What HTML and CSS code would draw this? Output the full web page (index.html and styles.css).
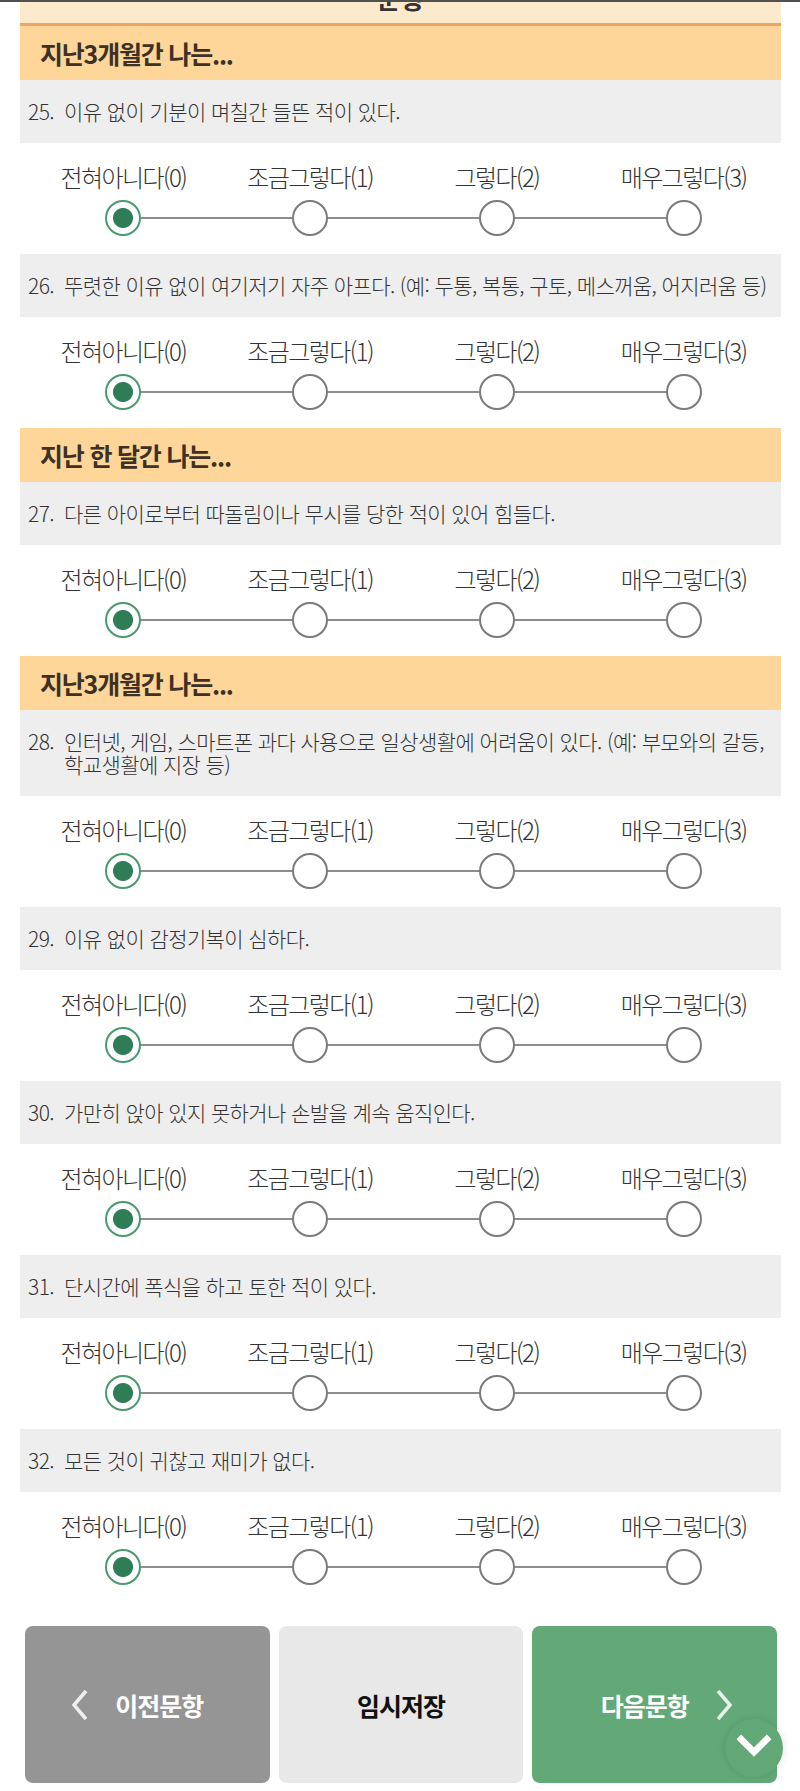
FILE: index.html
```html
<!DOCTYPE html>
<html lang="ko">

<head>
  <meta charset="UTF-8">
  <meta name="viewport" content="width=device-width, initial-scale=1.0">
  <title>마음건강 자가검사</title>

  <link rel="stylesheet" href="styles.css">

</head>

<body>

  <div class="page">
    <div class="title">
      <h1>문항</h1>
    </div>

    <!-- 지난 3개월 -->
    <div class="group">지난3개월간 나는...</div>

    <div class="q"><span class="no">25.</span><span>이유 없이 기분이 며칠간 들뜬 적이 있다.</span></div>
    <div class="opts">
      <label class="opt"><span>전혀아니다(0)</span><input type="radio" name="q25" checked></label>
      <label class="opt"><span>조금그렇다(1)</span><input type="radio" name="q25"></label>
      <label class="opt"><span>그렇다(2)</span><input type="radio" name="q25"></label>
      <label class="opt"><span>매우그렇다(3)</span><input type="radio" name="q25"></label>
    </div>

    <div class="q"><span class="no">26.</span><span>뚜렷한 이유 없이 여기저기 자주 아프다. (예: 두통, 복통, 구토, 메스꺼움, 어지러움 등)</span></div>
    <div class="opts">
      <label class="opt"><span>전혀아니다(0)</span><input type="radio" name="q26" checked></label>
      <label class="opt"><span>조금그렇다(1)</span><input type="radio" name="q26"></label>
      <label class="opt"><span>그렇다(2)</span><input type="radio" name="q26"></label>
      <label class="opt"><span>매우그렇다(3)</span><input type="radio" name="q26"></label>
    </div>

    <!-- 지난 한 달 -->
    <div class="group">지난 한 달간 나는...</div>

    <div class="q"><span class="no">27.</span><span>다른 아이로부터 따돌림이나 무시를 당한 적이 있어 힘들다.</span></div>
    <div class="opts">
      <label class="opt"><span>전혀아니다(0)</span><input type="radio" name="q27" checked></label>
      <label class="opt"><span>조금그렇다(1)</span><input type="radio" name="q27"></label>
      <label class="opt"><span>그렇다(2)</span><input type="radio" name="q27"></label>
      <label class="opt"><span>매우그렇다(3)</span><input type="radio" name="q27"></label>
    </div>

    <!-- 지난 3개월 -->
    <div class="group">지난3개월간 나는...</div>

    <div class="q"><span class="no">28.</span><span>인터넷, 게임, 스마트폰 과다 사용으로 일상생활에 어려움이 있다. (예: 부모와의 갈등, 학교생활에 지장 등)</span></div>
    <div class="opts">
      <label class="opt"><span>전혀아니다(0)</span><input type="radio" name="q28" checked></label>
      <label class="opt"><span>조금그렇다(1)</span><input type="radio" name="q28"></label>
      <label class="opt"><span>그렇다(2)</span><input type="radio" name="q28"></label>
      <label class="opt"><span>매우그렇다(3)</span><input type="radio" name="q28"></label>
    </div>

    <div class="q"><span class="no">29.</span><span>이유 없이 감정기복이 심하다.</span></div>
    <div class="opts">
      <label class="opt"><span>전혀아니다(0)</span><input type="radio" name="q29" checked></label>
      <label class="opt"><span>조금그렇다(1)</span><input type="radio" name="q29"></label>
      <label class="opt"><span>그렇다(2)</span><input type="radio" name="q29"></label>
      <label class="opt"><span>매우그렇다(3)</span><input type="radio" name="q29"></label>
    </div>

    <div class="q"><span class="no">30.</span><span>가만히 앉아 있지 못하거나 손발을 계속 움직인다.</span></div>
    <div class="opts">
      <label class="opt"><span>전혀아니다(0)</span><input type="radio" name="q30" checked></label>
      <label class="opt"><span>조금그렇다(1)</span><input type="radio" name="q30"></label>
      <label class="opt"><span>그렇다(2)</span><input type="radio" name="q30"></label>
      <label class="opt"><span>매우그렇다(3)</span><input type="radio" name="q30"></label>
    </div>

    <div class="q"><span class="no">31.</span><span>단시간에 폭식을 하고 토한 적이 있다.</span></div>
    <div class="opts">
      <label class="opt"><span>전혀아니다(0)</span><input type="radio" name="q31" checked></label>
      <label class="opt"><span>조금그렇다(1)</span><input type="radio" name="q31"></label>
      <label class="opt"><span>그렇다(2)</span><input type="radio" name="q31"></label>
      <label class="opt"><span>매우그렇다(3)</span><input type="radio" name="q31"></label>
    </div>

    <div class="q"><span class="no">32.</span><span>모든 것이 귀찮고 재미가 없다.</span></div>
    <div class="opts">
      <label class="opt"><span>전혀아니다(0)</span><input type="radio" name="q32" checked></label>
      <label class="opt"><span>조금그렇다(1)</span><input type="radio" name="q32"></label>
      <label class="opt"><span>그렇다(2)</span><input type="radio" name="q32"></label>
      <label class="opt"><span>매우그렇다(3)</span><input type="radio" name="q32"></label>
    </div>

    <!-- 하단 버튼 -->
    <div class="nav">
      <button class="btn prev">
        <svg viewBox="0 0 18 32"><polyline points="15,2 3,16 15,30" /></svg>
        이전문항
      </button>
      <button class="btn save">임시저장</button>
      <button class="btn next">
        다음문항
        <svg viewBox="0 0 18 32"><polyline points="3,2 15,16 3,30" /></svg>
      </button>
    </div>
  </div>

  <a class="to-bottom" href="#">
    <svg viewBox="0 0 40 26"><polyline points="4,4 20,20 36,4" /></svg>
  </a>

</body>

</html>
```

FILE: styles.css
```css
* {
  margin: 0;
  padding: 0;
  box-sizing: border-box;
}

body {
  font-family: "Noto Sans CJK KR", "Noto Sans", sans-serif;
  color: #333;
  background: #fff;
  border-top: 2px solid #505050;
}

.page {
  padding: 0 19px 8px 20px;
}

/* 상단 타이틀 (스크롤로 잘려 있음) */
.title {
  height: 24px;
  background: #fdeacd;
  border-bottom: 3px solid #eaa662;
  text-align: center;
  overflow: hidden;
}

.title h1 {
  font-size: 26px;
  line-height: 26px;
  font-weight: 700;
  color: #333;
  margin-top: -17px;
}

.group {
  height: 54px;
  background: #fed699;
  padding-left: 20px;
  display: flex;
  align-items: center;
  font-size: 25px;
  font-weight: 700;
  letter-spacing: -1.2px;
  color: #3d3125;
}

.q {
  display: flex;
  background: #eeeeee;
  padding: 20px 10px 20px 8px;
  font-size: 21px;
  line-height: 23px;
  font-weight: 300;
  letter-spacing: -0.6px;
  color: #333;
  word-break: keep-all;
}

.q .no {
  flex: none;
  width: 36px;
}

/* 보기 + 라디오 */
.opts {
  position: relative;
  display: grid;
  grid-template-columns: repeat(4, 1fr);
  margin: 0 4px 0 10px;
  padding: 20px 0 18px;
}

.opts::before {
  content: '';
  position: absolute;
  left: 12.5%;
  right: 12.5%;
  top: 74px;
  height: 2px;
  background: #8d8d8d;
}

.opt {
  display: flex;
  flex-direction: column;
  align-items: center;
}

.opt span {
  font-size: 24px;
  line-height: 28px;
  font-weight: 300;
  letter-spacing: -1.6px;
  white-space: nowrap;
  margin-bottom: 9px;
}

.opt input {
  appearance: none;
  -webkit-appearance: none;
  position: relative;
  width: 36px;
  height: 36px;
  margin: 0;
  border-radius: 50%;
  border: 2px solid #7b7b7b;
  background: #fff;
}

.opt input:checked {
  border-color: #4a9a70;
  background: radial-gradient(circle, #2e7d57 9.5px, #fff 10.5px);
}

/* 이전 / 임시저장 / 다음 */
.nav {
  display: grid;
  grid-template-columns: repeat(3, 1fr);
  gap: 9px;
  margin: 23px 4px 0 5px;
}

.btn {
  height: 157px;
  border: none;
  border-radius: 8px;
  display: flex;
  align-items: center;
  justify-content: center;
  gap: 26px;
  font-family: inherit;
  font-size: 25px;
  font-weight: 700;
  letter-spacing: -1px;
}

.btn svg {
  width: 18px;
  height: 32px;
  fill: none;
  stroke: rgba(255, 255, 255, 0.85);
  stroke-width: 3.5;
}

.prev {
  background: #959595;
  color: #fff;
  padding-right: 20px;
}

.save {
  background: #e8e8e8;
  color: #111;
}

.next {
  background: #63a978;
  color: #fff;
  padding-left: 24px;
}

.to-bottom {
  position: fixed;
  right: 17px;
  bottom: 14px;
  width: 58px;
  height: 58px;
  border-radius: 50%;
  background: #62a877;
  box-shadow: 0 0 8px rgba(0, 0, 0, 0.12);
  display: flex;
  align-items: center;
  justify-content: center;
  padding-bottom: 6px;
}

.to-bottom svg {
  width: 38px;
  height: 25px;
  fill: none;
  stroke: #fff;
  stroke-width: 7;
}
```
